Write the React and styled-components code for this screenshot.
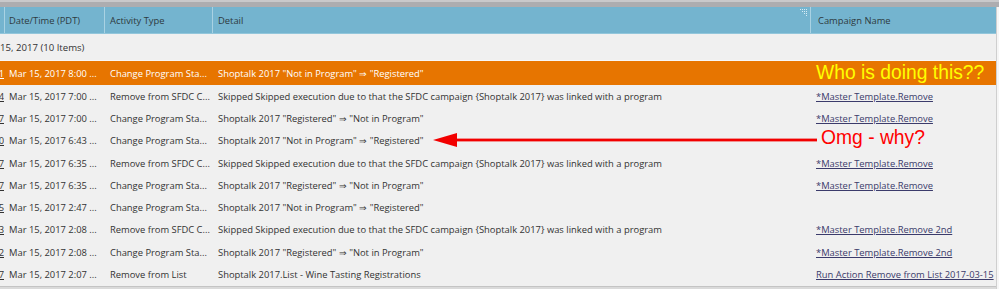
import React from "react";
import styled, { createGlobalStyle } from "styled-components";

const COLS = "4px 100px 108px 598px 186px";

const rows = [
  { id: "21", date: "Mar 15, 2017 8:00 ...", type: "Change Program Sta...", detail: "Shoptalk 2017 \"Not in Program\" \u21D2 \"Registered\"", note: "Who is doing this??", hot: true },
  { id: "14", date: "Mar 15, 2017 7:00 ...", type: "Remove from SFDC C...", detail: "Skipped Skipped execution due to that the SFDC campaign {Shoptalk 2017} was linked with a program", link: "*Master Template.Remove" },
  { id: "17", date: "Mar 15, 2017 7:00 ...", type: "Change Program Sta...", detail: "Shoptalk 2017 \"Registered\" \u21D2 \"Not in Program\"", link: "*Master Template.Remove" },
  { id: "10", date: "Mar 15, 2017 6:43 ...", type: "Change Program Sta...", detail: "Shoptalk 2017 \"Not in Program\" \u21D2 \"Registered\"" },
  { id: "17", date: "Mar 15, 2017 6:35 ...", type: "Remove from SFDC C...", detail: "Skipped Skipped execution due to that the SFDC campaign {Shoptalk 2017} was linked with a program", link: "*Master Template.Remove" },
  { id: "17", date: "Mar 15, 2017 6:35 ...", type: "Change Program Sta...", detail: "Shoptalk 2017 \"Registered\" \u21D2 \"Not in Program\"", link: "*Master Template.Remove" },
  { id: "15", date: "Mar 15, 2017 2:47 ...", type: "Change Program Sta...", detail: "Shoptalk 2017 \"Not in Program\" \u21D2 \"Registered\"" },
  { id: "13", date: "Mar 15, 2017 2:08 ...", type: "Remove from SFDC C...", detail: "Skipped Skipped execution due to that the SFDC campaign {Shoptalk 2017} was linked with a program", link: "*Master Template.Remove 2nd" },
  { id: "12", date: "Mar 15, 2017 2:08 ...", type: "Change Program Sta...", detail: "Shoptalk 2017 \"Registered\" \u21D2 \"Not in Program\"", link: "*Master Template.Remove 2nd" },
  { id: "17", date: "Mar 15, 2017 2:07 ...", type: "Remove from List", detail: "Shoptalk 2017.List - Wine Tasting Registrations", link: "Run Action Remove from List 2017-03-15" },
];

const GlobalStyle = createGlobalStyle`
  html, body { margin: 0; padding: 0; background: #f6f6f6; }
  body { font-family: "Open Sans", "Liberation Sans", sans-serif; }
`;

const Frame = styled.div`
  position: relative;
  width: 999px;
  height: 289px;
  overflow: hidden;
  display: flex;
  flex-direction: column;
  background: #f6f6f6;
`;

const TopBar = styled.div`
  height: 5px;
  flex-shrink: 0;
  border-top: 2px solid #c9c9cb;
  background: #adadb0;
`;

const Table = styled.div`
  width: 996px;
  border-right: 1px solid #cfcfcf;
  background: #f0f0f0;
  flex: 1;
  min-height: 0;
  display: flex;
  flex-direction: column;
`;

const Row = styled.div`
  display: grid;
  grid-template-columns: ${COLS};
  height: ${p => p.$h}px;
  flex-shrink: 0;
  align-items: center;
  font-size: 9.4px;
  color: ${p => (p.$hot ? "#fff" : "#333")};
  background: ${p => (p.$hot ? "#e77500" : "transparent")};
  white-space: nowrap;
`;

const HeadRow = styled(Row)`
  align-items: stretch;
  background: #74b4cf;
  border-bottom: 1px solid #92c6db;
  color: #2e3a40;
`;

const HeadCell = styled.div`
  display: flex;
  align-items: center;
  justify-content: space-between;
  padding-left: ${p => p.$pad}px;
  border-left: ${p => (p.$first ? "none" : "1px solid #a9d2e3")};
`;

const GroupRow = styled.div`
  height: 26px;
  flex-shrink: 0;
  display: flex;
  align-items: center;
  font-size: 9.6px;
  color: #333;
  border-bottom: 1px solid #f8f8f8;
`;

const IdCell = styled.div`
  display: flex;
  justify-content: flex-end;
  overflow: hidden;
  text-decoration: underline;
`;

const Cell = styled.div`
  padding-left: ${p => p.$pad}px;
  overflow: hidden;
`;

const CampaignLink = styled.a`
  color: #3b3b6b;
  text-decoration: underline;
`;

const Note = styled.span`
  display: block;
  font-family: "Liberation Sans", Arial, sans-serif;
  font-size: 19.3px;
  line-height: 20px;
  color: #ffff00;
`;

const BottomBar = styled.div`
  flex: 1;
  border-top: 1px solid #c4c4c4;
  background: #dadada;
`;

const Arrow = styled.svg`
  position: absolute;
  left: 433px;
  top: 132px;
`;

const Callout = styled.span`
  position: absolute;
  left: 821px;
  top: 127px;
  font-family: "Liberation Sans", Arial, sans-serif;
  font-size: 19.3px;
  color: #ff0000;
  white-space: nowrap;
`;

const Dots = () => (
  <svg width="7" height="8" viewBox="0 0 7 8" style={{ alignSelf: "flex-start", marginTop: 2, marginRight: 3 }}>
    {[[0, 0], [2, 0], [4, 0], [6, 0], [2, 2], [4, 2], [6, 2], [4, 4], [6, 4], [6, 6]].map(([x, y], i) => (
      <rect key={i} x={x} y={y} width="1" height="1" fill="#d8ecf4" />
    ))}
  </svg>
);

export default function App() {
  return (
    <>
      <GlobalStyle />
      <Frame>
        <TopBar />
        <Table>
          <HeadRow $h={26}>
            <HeadCell $first $pad={0} />
            <HeadCell $pad={4}>Date/Time (PDT)</HeadCell>
            <HeadCell $pad={5}>Activity Type</HeadCell>
            <HeadCell $pad={5}>
              Detail
              <Dots />
            </HeadCell>
            <HeadCell $pad={7}>Campaign Name</HeadCell>
          </HeadRow>
          <GroupRow>15, 2017 (10 Items)</GroupRow>
          {rows.map((r, i) => (
            <Row key={i} $h={r.hot ? 24 : 22.3} $hot={r.hot}>
              <IdCell>
                <span>{r.id}</span>
              </IdCell>
              <Cell $pad={5}>{r.date}</Cell>
              <Cell $pad={6}>{r.type}</Cell>
              <Cell $pad={6}>{r.detail}</Cell>
              <Cell $pad={6}>
                {r.note && <Note>{r.note}</Note>}
                {r.link && <CampaignLink href="#">{r.link}</CampaignLink>}
              </Cell>
            </Row>
          ))}
          <BottomBar />
        </Table>
        <Arrow width="384" height="16" viewBox="0 0 384 16">
          <polygon points="0,8 24,1 24,15" fill="#f20000" />
          <rect x="20" y="6.6" width="364" height="2.8" fill="#f20000" />
        </Arrow>
        <Callout>Omg - why?</Callout>
      </Frame>
    </>
  );
}
